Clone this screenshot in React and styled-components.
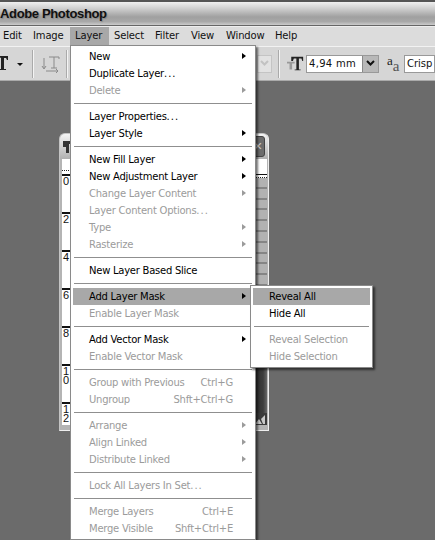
import React from 'react';
import styled, { createGlobalStyle } from 'styled-components';

const GlobalStyle = createGlobalStyle`
  html, body {
    margin: 0;
    padding: 0;
    background: #6b6b6b;
  }
  body {
    font-family: "DejaVu Sans", Verdana, sans-serif;
    font-size: 10px;
  }
`;

const Page = styled.div`
  position: relative;
  width: 435px;
  height: 540px;
  overflow: hidden;
  background: #6b6b6b;
`;

const TitleBar = styled.div`
  height: 23px;
  border-top: 2px solid #555;
  border-bottom: 1px solid #666;
  display: flex;
  align-items: center;
  background: linear-gradient(#f0f0f0 0%, #cdcdcd 30%, #a0a0a0 65%, #a8a8a8 85%, #cccccc 100%);
`;

const TitleText = styled.span`
  font-family: "Liberation Sans", Arial, sans-serif;
  font-size: 13px;
  font-weight: bold;
  letter-spacing: -0.35px;
  color: #111;
  text-shadow: 1px 1px 1px #888;
`;

const MenuBar = styled.div`
  height: 19px;
  display: flex;
  margin-left: -2px;
  background: #dcdcdc;
  border-top: 1px solid #eee;
`;

const MenuTitle = styled.div`
  box-sizing: border-box;
  flex: none;
  width: ${(p) => p.$width}px;
  height: 19px;
  line-height: 18px;
  padding-left: 5px;
  letter-spacing: -0.15px;
  color: #111;
  background: ${(p) => (p.$open ? '#a8a8a8' : 'transparent')};
`;

const OptionsBar = styled.div`
  height: 33px;
  display: flex;
  align-items: center;
  background: #d6d6d6;
  border-top: 1px solid #f2f2f2;
  border-bottom: 1px solid #aaa;
`;

const Divider = styled.div`
  flex: none;
  width: 2px;
  height: 28px;
  background: #f4f4f4;
  border-left: 1px solid #aaa;
  box-sizing: border-box;
  margin-left: ${(p) => p.$left}px;
`;

const IconSlot = styled.div`
  flex: none;
  display: flex;
  align-items: center;
  margin-left: ${(p) => p.$left}px;
`;

const AntiAlias = styled.div`
  flex: none;
  width: 15px;
  margin-left: 8px;
  display: flex;
  font-family: "Liberation Serif", serif;
  line-height: 10px;
`;

const SmallA = styled.span`
  font-size: 13px;
  color: #222;
  transform: translateY(-3px);
`;

const BigA = styled.span`
  font-size: 15px;
  color: #555;
  transform: translateY(2px);
`;

const ComboField = styled.div`
  flex: ${(p) => (p.$width ? 'none' : '1')};
  display: flex;
  align-items: center;
  box-sizing: border-box;
  height: 18px;
  width: ${(p) => (p.$width ? `${p.$width}px` : 'auto')};
  margin-left: ${(p) => p.$left}px;
  padding-left: 2px;
  background: #fff;
  border: 1px solid #999;
  color: #111;
  font-size: 10px;
  letter-spacing: ${(p) => (p.$width ? '0.3px' : '0')};
  white-space: nowrap;
`;

const DisabledCombo = styled.div`
  flex: none;
  display: flex;
  align-items: center;
  justify-content: center;
  box-sizing: border-box;
  width: 15px;
  height: 18px;
  margin-left: ${(p) => p.$left}px;
  background: #e2e2e2;
  border: 1px solid #c4c4c4;
`;

const ComboButton = styled.div`
  margin-left: auto;
  width: 15px;
  height: 16px;
  display: flex;
  align-items: center;
  justify-content: center;
  background: #b8b8b8;
  border-left: 1px solid #888;
`;

const DocWindow = styled.div`
  position: absolute;
  left: 59px;
  top: 133px;
  width: 210px;
  height: 298px;
  box-sizing: border-box;
  padding: 0 1px 5px 2px;
  background: #b4b4b4;
  border: 1px solid #c4c4c4;
  border-right-color: #eee;
  border-bottom-color: #eee;
  border-radius: 6px 6px 0 0;
  display: flex;
  flex-direction: column;
`;

const DocTitle = styled.div`
  height: 25px;
  flex: none;
  display: flex;
  justify-content: space-between;
  align-items: center;
  background: linear-gradient(#f4f4f4, #b0b0b0);
  margin: 0 -1px 0 -2px;
  padding: 0 3px;
  border-radius: 5px 5px 0 0;
`;

const CloseBox = styled.div`
  width: 14px;
  height: 21px;
  box-sizing: border-box;
  background: #6c6c6c;
  border: 1px solid #444;
  border-radius: 3px;
  color: #ccc;
  font-family: "Liberation Sans", Arial, sans-serif;
  font-size: 15px;
  line-height: 18px;
  text-align: center;
`;

const DocBody = styled.div`
  flex: 1;
  display: flex;
  justify-content: space-between;
  background: #fff;
  min-height: 0;
`;

const VRuler = styled.div`
  width: 11px;
  overflow: hidden;
  background: #fff;
  border-right: 1px solid #111;
`;

const RulerCap = styled.div`
  position: relative;
  flex: none;
  height: ${(p) => p.$height}px;
  margin-bottom: ${(p) => p.$gap || 0}px;
  background: #fff;
  border-bottom: 1px dotted #222;
`;

const RulerTick = styled.div`
  position: absolute;
  left: 0;
  right: 0;
  bottom: 2px;
  height: 5px;
  border-left: 1px solid #111;
  border-bottom: 1px solid #111;
`;

const RulerMark = styled.div`
  height: 38px;
  box-sizing: border-box;
  border-top: 2px solid #111;
  color: #111;
  font-family: "Liberation Sans", Arial, sans-serif;
  font-size: 11px;
  line-height: 9px;
  padding: 1px 0 0 1px;
  white-space: pre-line;
`;

const Stripes = styled.div`
  width: 13px;
  display: flex;
  flex-direction: column;
`;

const StripeFill = styled.div`
  flex: 1;
  background: repeating-linear-gradient(#b2b2b2 0 8.800px, #858585 8.800px 10.800px);
`;

const DarkFill = styled.div`
  height: 70px;
  flex: none;
  background: linear-gradient(90deg, #2e2e2e, #3c3c3c 70%, #666);
`;

const Grip = styled.div`
  height: 12px;
  flex: none;
  display: flex;
  background: #3a3a3a;
`;

const Menu = styled.div`
  position: absolute;
  left: ${(p) => p.$left}px;
  top: ${(p) => p.$top}px;
  width: ${(p) => p.$width}px;
  box-sizing: border-box;
  padding: 2px;
  background: #fff;
  border: 1px solid #8a8a8a;
  box-shadow: 2px 2px 2px rgba(0, 0, 0, 0.55);
`;

const Item = styled.div`
  position: relative;
  height: 17px;
  line-height: 17px;
  padding-left: 16px;
  padding-right: 20px;
  display: flex;
  justify-content: space-between;
  white-space: nowrap;
  letter-spacing: -0.25px;
  color: ${(p) => (p.$disabled ? '#9b9b9b' : '#000')};
  background: ${(p) => (p.$active ? '#a8a8a8' : 'transparent')};
`;

const Dots = styled.span`
  letter-spacing: 1px;
`;

const Arrow = styled.span`
  position: absolute;
  right: 7px;
  top: 5px;
  width: 0;
  height: 0;
  border-top: 3.5px solid transparent;
  border-bottom: 3.5px solid transparent;
  border-left: 4px solid ${(p) => (p.$disabled ? '#9b9b9b' : '#000')};
`;

const Separator = styled.div`
  height: 1px;
  margin: 4px 1px;
  background: #8f8f8f;
`;

const menuTitles = [
  ['Edit', 30],
  ['Image', 42],
  ['Layer', 39, true],
  ['Select', 41],
  ['Filter', 36],
  ['View', 35],
  ['Window', 49],
  ['Help', 40],
];

const layerMenu = [
  { label: 'New', arrow: true },
  { label: 'Duplicate Layer', dots: true },
  { label: 'Delete', arrow: true, disabled: true },
  null,
  { label: 'Layer Properties', dots: true },
  { label: 'Layer Style', arrow: true },
  null,
  { label: 'New Fill Layer', arrow: true },
  { label: 'New Adjustment Layer', arrow: true },
  { label: 'Change Layer Content', arrow: true, disabled: true },
  { label: 'Layer Content Options', dots: true, disabled: true },
  { label: 'Type', arrow: true, disabled: true },
  { label: 'Rasterize', arrow: true, disabled: true },
  null,
  { label: 'New Layer Based Slice' },
  null,
  { label: 'Add Layer Mask', arrow: true, active: true },
  { label: 'Enable Layer Mask', disabled: true },
  null,
  { label: 'Add Vector Mask', arrow: true },
  { label: 'Enable Vector Mask', disabled: true },
  null,
  { label: 'Group with Previous', shortcut: 'Ctrl+G', disabled: true },
  { label: 'Ungroup', shortcut: 'Shft+Ctrl+G', disabled: true },
  null,
  { label: 'Arrange', arrow: true, disabled: true },
  { label: 'Align Linked', arrow: true, disabled: true },
  { label: 'Distribute Linked', arrow: true, disabled: true },
  null,
  { label: 'Lock All Layers In Set', dots: true, disabled: true },
  null,
  { label: 'Merge Layers', shortcut: 'Ctrl+E', disabled: true },
  { label: 'Merge Visible', shortcut: 'Shft+Ctrl+E', disabled: true },
];

const maskMenu = [
  { label: 'Reveal All', active: true },
  { label: 'Hide All' },
  null,
  { label: 'Reveal Selection', disabled: true },
  { label: 'Hide Selection', disabled: true },
];

const MenuRows = ({ items }) =>
  items.map((item, i) =>
    item ? (
      <Item key={i} $disabled={item.disabled} $active={item.active}>
        <span>
          {item.label}
          {item.dots && <Dots>...</Dots>}
        </span>
        {item.shortcut && <span>{item.shortcut}</span>}
        {item.arrow && <Arrow $disabled={item.disabled} />}
      </Item>
    ) : (
      <Separator key={i} />
    )
  );

const App = () => (
  <Page>
    <GlobalStyle />
    <TitleBar>
      <TitleText>Adobe Photoshop</TitleText>
    </TitleBar>
    <MenuBar>
      {menuTitles.map(([name, width, open]) => (
        <MenuTitle key={name} $width={width} $open={open}>
          {name}
        </MenuTitle>
      ))}
    </MenuBar>
    <OptionsBar>
      <IconSlot $left={-3}>
        <svg width="28" height="20" viewBox="0 0 28 20">
          <path d="M0 2h11v4h-1L9 4H7v11h2v1H2v-1h2V4" fill="#222" />
          <path d="M20 9h6l-3 3z" fill="#111" />
        </svg>
      </IconSlot>
      <Divider $left={7} />
      <IconSlot $left={7}>
        <svg width="20" height="20" viewBox="0 0 20 20">
          <path d="M8 3h10v2M13 3v11M10 14h6M3 4v10M1 12l2 3 2-3M5 17h12M15 15l2 2-2 2" fill="none" stroke="#8a8a8a" />
        </svg>
      </IconSlot>
      <Divider $left={5} />
      <DisabledCombo $left={189}>
        <svg width="9" height="7" viewBox="0 0 9 7">
          <path d="M1 1l3.500 3.500L8 1" fill="none" stroke="#c2c2c2" strokeWidth="2" />
        </svg>
      </DisabledCombo>
      <Divider $left={6} />
      <IconSlot $left={7}>
        <svg width="17" height="17" viewBox="0 0 20 20">
          <path d="M0 8h9v2H6v7H3v-7H0z" fill="#999" />
          <path d="M5 2h14v5h-1l-1-3h-3v13h2v1H9v-1h2V4H8L7 7H5z" fill="#222" />
        </svg>
      </IconSlot>
      <ComboField $width={73} $left={2}>
        4,94 mm
        <ComboButton>
          <svg width="9" height="7" viewBox="0 0 9 7">
            <path d="M1 1l3.500 3.500L8 1" fill="none" stroke="#111" strokeWidth="2" />
          </svg>
        </ComboButton>
      </ComboField>
      <AntiAlias>
        <SmallA>a</SmallA>
        <BigA>a</BigA>
      </AntiAlias>
      <ComboField $left={2}>Crisp</ComboField>
    </OptionsBar>
    <DocWindow>
      <DocTitle>
        <svg width="9" height="14" viewBox="0 0 9 14">
          <path d="M0 1h9v3H6v9H3V7H0z" fill="#333" />
        </svg>
        <CloseBox>×</CloseBox>
      </DocTitle>
      <DocBody>
        <VRuler>
          <RulerCap $height={11} $gap={3} />
          {['0', '2', '4', '6', '8', '1\n0', '1\n2'].map((n) => (
            <RulerMark key={n}>{n}</RulerMark>
          ))}
        </VRuler>
        <Stripes>
          <RulerCap $height={18}>
            <RulerTick />
          </RulerCap>
          <StripeFill />
          <DarkFill />
          <Grip>
            <svg width="13" height="12" viewBox="0 0 13 12">
              <path d="M1 11l4-5 3 5zM7 6l4-4v9h-2z" fill="#c8c8c8" />
            </svg>
          </Grip>
        </Stripes>
      </DocBody>
    </DocWindow>
    <Menu $left={70} $top={45} $width={186}>
      <MenuRows items={layerMenu} />
    </Menu>
    <Menu $left={250} $top={285} $width={123}>
      <MenuRows items={maskMenu} />
    </Menu>
  </Page>
);

export default App;
